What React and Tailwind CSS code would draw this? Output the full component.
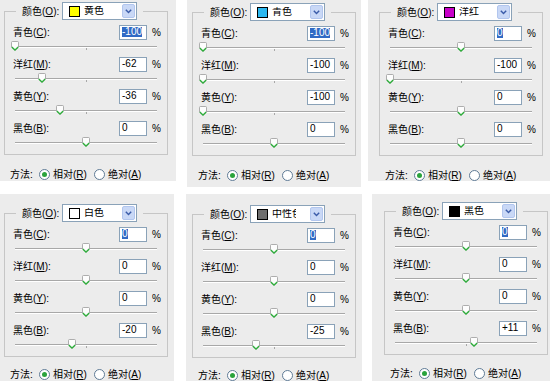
import React from 'react';

// Six screenshots of the Photoshop "Selective Color" dialog, pasted into one sheet
const channels = [
  ['青色', 'C'],
  ['洋红', 'M'],
  ['黄色', 'Y'],
  ['黑色', 'B'],
];

const topRow = [
  { color: '黄色', swatch: 'bg-[#ffff00]', values: ['-100', '-62', '-36', '0'], wrap: 'w-[176px] h-[181px] pl-[4px] pt-[2px]', foot: 'mt-[12px]' },
  { color: '青色', swatch: 'bg-[#2cb8f0]', values: ['-100', '-100', '-100', '0'], wrap: 'ml-[11px] w-[174px] h-[187px] pl-[5px] pt-[3px]', foot: 'mt-[12px]' },
  { color: '洋红', swatch: 'bg-[#c800c8]', values: ['0', '-100', '0', '0'], wrap: 'ml-[7px] w-[182px] h-[181px] pl-[11px] pt-[3px]', foot: 'mt-[12px]' },
];

const bottomRow = [
  { color: '白色', swatch: 'bg-white', values: ['0', '0', '0', '-20'], wrap: 'w-[174px] h-[187px] pl-[4px] pt-[10px]', foot: 'mt-[10px]' },
  { color: '中性色', swatch: 'bg-[#6e6e6e]', values: ['0', '0', '0', '-25'], wrap: 'ml-[12px] w-[176px] h-[187px] pl-[6px] pt-[11px]', foot: 'mt-[10px]' },
  { color: '黑色', swatch: 'bg-black', values: ['0', '0', '0', '+11'], wrap: 'ml-[10px] w-[178px] h-[187px] pl-[12px] pt-[8px]', foot: 'mt-[11px]' },
];

const Thumb = ({ value }) => {
  const left = ((parseInt(value, 10) + 100) / 200) * 142;
  return (
    <svg
      className="absolute top-[2px] -translate-x-1/2"
      style={{ left }}
      width="9"
      height="10"
      viewBox="0 0 9 10"
    >
      <path d="M1 1.5 Q1 0.5 2 0.5 H7 Q8 0.5 8 1.5 V6 L4.5 9.3 L1 6 Z" fill="#fdfdfd" stroke="#9a9a9a" strokeWidth="0.8" />
      <path d="M1.3 6 L4.5 9 L7.7 6" fill="none" stroke="#2fae3c" strokeWidth="1.3" />
    </svg>
  );
};

const Slider = ({ value }) => (
  <div className="relative ml-[10px] w-[142px] h-[18px] pt-[7px]">
    <div className="h-[2px] border-t border-[#a8a8a8] bg-white" />
    <div className="ml-[71px] w-px h-[2px] bg-[#a8a8a8]" />
    <Thumb value={value} />
  </div>
);

const NumberBox = ({ value, selected }) => (
  <div className="w-[28px] h-[15px] border border-[#8aa2b8] bg-white flex items-center pl-[2px] text-[10px] leading-none text-black">
    {selected ? <span className="bg-[#316ac5] text-white">{value}</span> : value}
  </div>
);

const ColorSelect = ({ color, swatch }) => (
  <div className="w-[75px] h-[18px] border border-[#8aa2b8] bg-white flex items-center">
    <div className={`ml-[6px] w-[11px] h-[11px] border border-black ${swatch}`} />
    <div className="ml-[4px] w-[24px] overflow-hidden whitespace-nowrap text-[10px] leading-none text-black">{color}</div>
    <div className="ml-auto mr-[1px] w-[13px] h-[14px] rounded-[2px] bg-[#c9d8f6] border border-[#b2c6ee] flex items-center justify-center">
      <svg width="7" height="5" viewBox="0 0 7 5">
        <path d="M0.8 0.8 L3.5 3.6 L6.2 0.8" fill="none" stroke="#3a5ba8" strokeWidth="1.4" />
      </svg>
    </div>
  </div>
);

const Radio = ({ checked }) => (
  <div className="shrink-0 w-[11px] h-[11px] rounded-full border border-[#5f7b96] bg-white flex items-center justify-center">
    {checked && <div className="w-[5px] h-[5px] rounded-full bg-[#2aa33c]" />}
  </div>
);

const Panel = ({ color, swatch, values, wrap, foot }) => (
  <div className={`bg-[#ececec] ${wrap}`}>
    <fieldset className="w-[164px] border border-[#c6c6c6] pt-[5px] pb-[1px]">
      <legend className="ml-[11px] px-[6px]">
        <div className="flex items-center gap-[6px] text-[10px] text-black">
          <span className="w-[34px] whitespace-nowrap">颜色(<u>O</u>):</span>
          <ColorSelect color={color} swatch={swatch} />
        </div>
      </legend>
      {channels.map(([name, key], i) => (
        <div key={key}>
          <div className="h-[14px] flex items-center pl-[8px] pr-[6px] text-[10px] text-black">
            <span className="flex-1 whitespace-nowrap">
              {name}(<u>{key}</u>):
            </span>
            <NumberBox value={values[i]} selected={i === 0} />
            <span className="ml-[5px] w-[9px]">%</span>
          </div>
          <Slider value={values[i]} />
        </div>
      ))}
    </fieldset>
    <div className={`${foot} flex items-center whitespace-nowrap pl-[6px] text-[10px] text-black h-[14px]`}>
      <span className="w-[29px]">方法:</span>
      <Radio checked />
      <span className="ml-[3px]">相对(<u>R</u>)</span>
      <div className="ml-[7px]">
        <Radio />
      </div>
      <span className="ml-[3px]">绝对(<u>A</u>)</span>
    </div>
  </div>
);

export default function App() {
  return (
    <div className="w-[550px] h-[381px] bg-white overflow-hidden font-['Liberation_Sans','Noto_Sans_CJK_SC',sans-serif]">
      <div className="flex items-start h-[194px]">
        {topRow.map((p) => (
          <Panel key={p.color} {...p} />
        ))}
      </div>
      <div className="flex items-start">
        {bottomRow.map((p) => (
          <Panel key={p.color} {...p} />
        ))}
      </div>
    </div>
  );
}
